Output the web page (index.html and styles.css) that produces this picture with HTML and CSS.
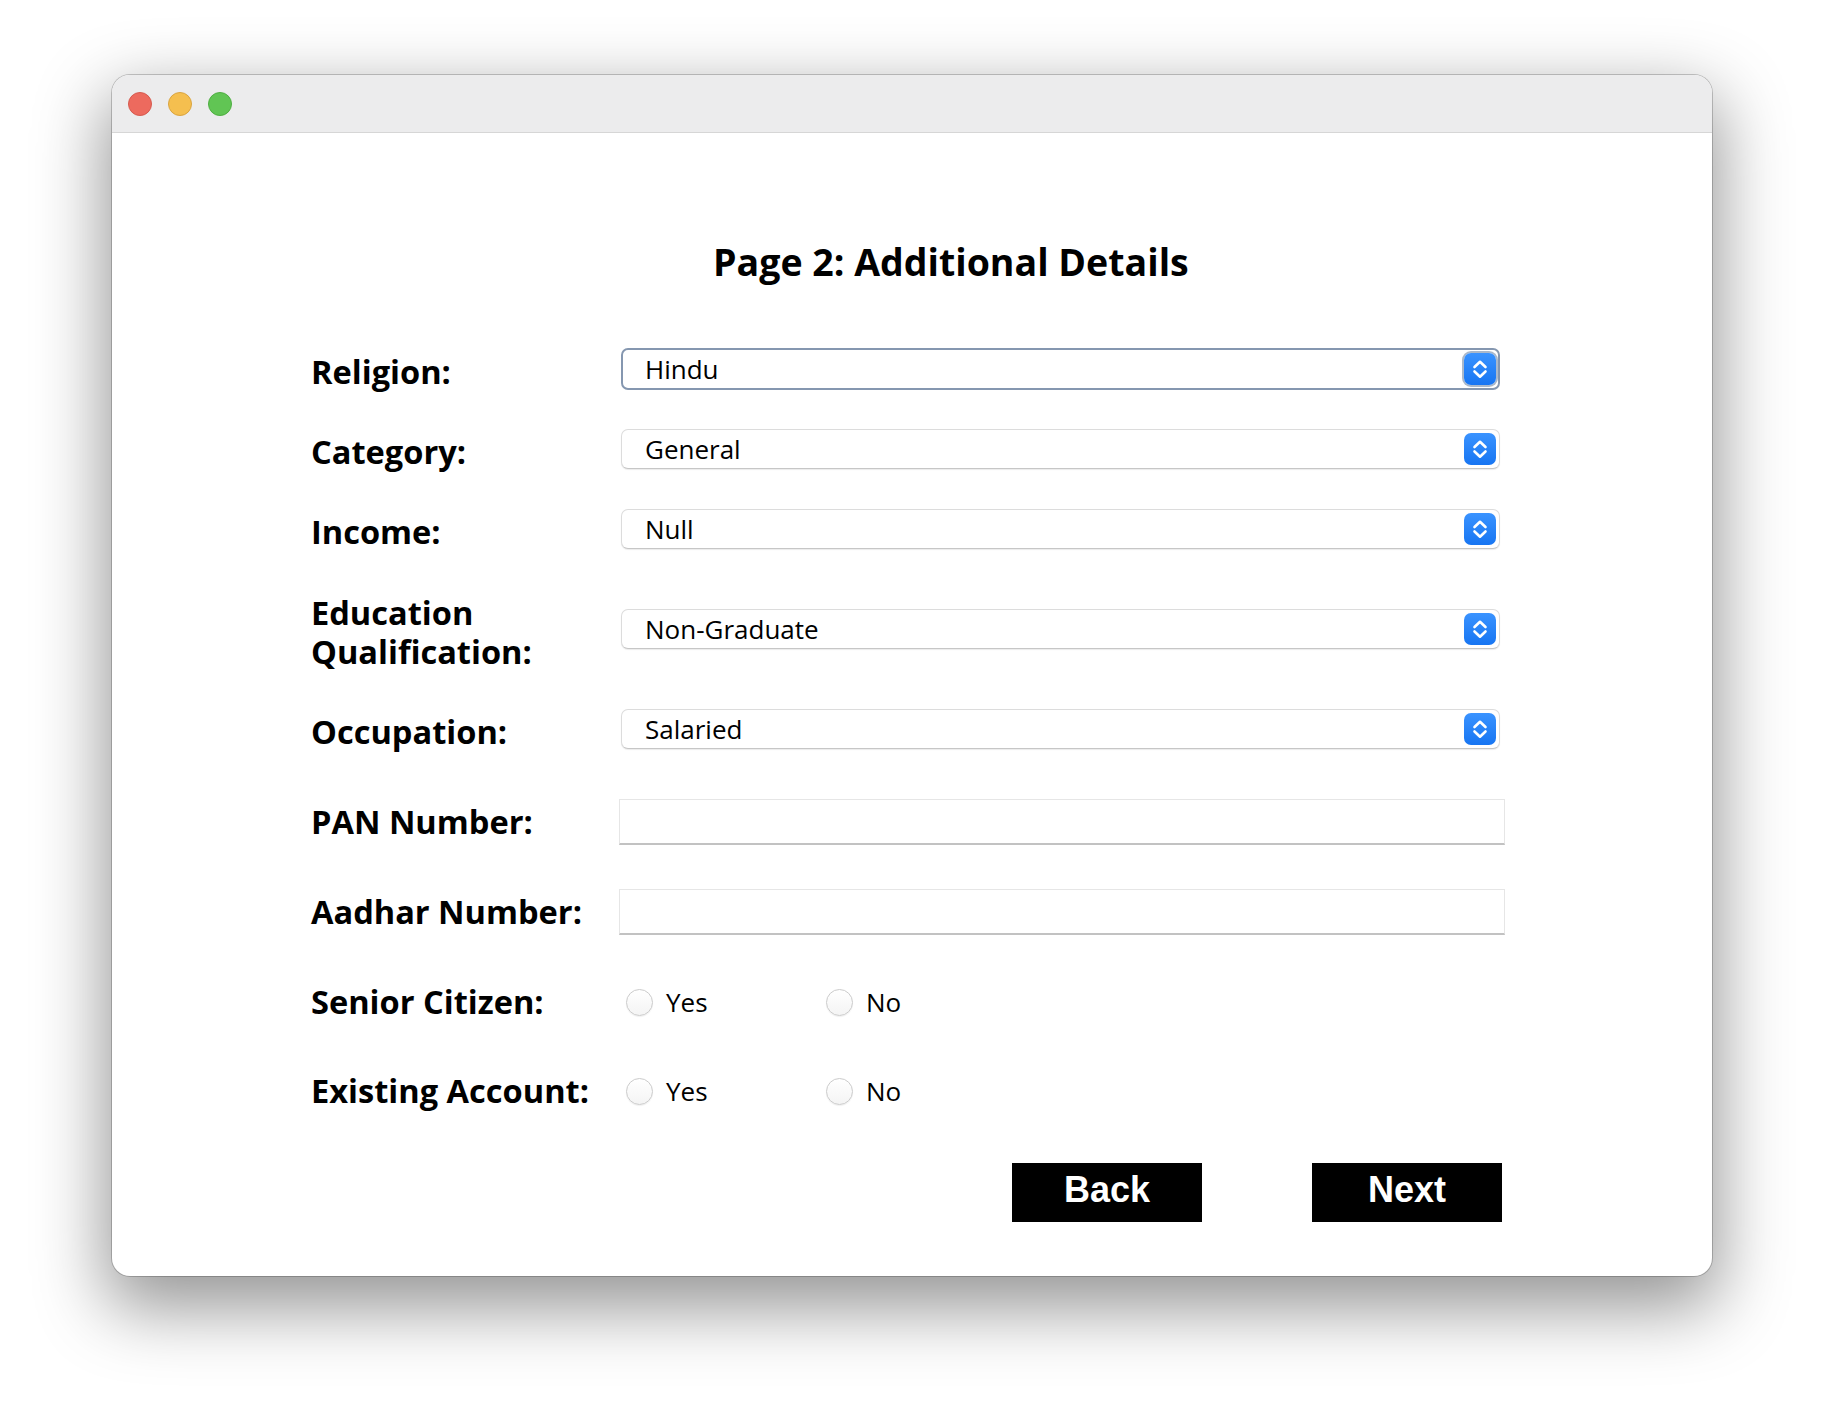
FILE: index.html
```html
<!DOCTYPE html>
<html lang="en">
<head>
<meta charset="utf-8">
<title>Page 2: Additional Details</title>
<link rel="stylesheet" href="styles.css">
</head>
<body>
<div class="window">
  <div class="titlebar">
    <span class="light light-red"></span>
    <span class="light light-yellow"></span>
    <span class="light light-green"></span>
  </div>
  <div class="content">
    <h1 class="title">Page 2: Additional Details</h1>
    <div class="form">
      <div class="label label-combo">Religion:</div>
      <div class="combo combo-focused"><span class="combo-text">Hindu</span><span class="stepper"><svg viewBox="0 0 32 32" width="32" height="32"><path d="M10.5 14 L16 8.8 L21.5 14 M10.5 18.5 L16 23.7 L21.5 18.5" fill="none" stroke="#fff" stroke-width="2.6" stroke-linecap="round" stroke-linejoin="round"/></svg></span></div>

      <div class="label label-combo">Category:</div>
      <div class="combo"><span class="combo-text">General</span><span class="stepper"><svg viewBox="0 0 32 32" width="32" height="32"><path d="M10.5 14 L16 8.8 L21.5 14 M10.5 18.5 L16 23.7 L21.5 18.5" fill="none" stroke="#fff" stroke-width="2.6" stroke-linecap="round" stroke-linejoin="round"/></svg></span></div>

      <div class="label label-combo">Income:</div>
      <div class="combo"><span class="combo-text">Null</span><span class="stepper"><svg viewBox="0 0 32 32" width="32" height="32"><path d="M10.5 14 L16 8.8 L21.5 14 M10.5 18.5 L16 23.7 L21.5 18.5" fill="none" stroke="#fff" stroke-width="2.6" stroke-linecap="round" stroke-linejoin="round"/></svg></span></div>

      <div class="label label-two"><div class="label-line">Education</div><div class="label-line">Qualification:</div></div>
      <div class="combo"><span class="combo-text">Non-Graduate</span><span class="stepper"><svg viewBox="0 0 32 32" width="32" height="32"><path d="M10.5 14 L16 8.8 L21.5 14 M10.5 18.5 L16 23.7 L21.5 18.5" fill="none" stroke="#fff" stroke-width="2.6" stroke-linecap="round" stroke-linejoin="round"/></svg></span></div>

      <div class="label label-combo">Occupation:</div>
      <div class="combo"><span class="combo-text">Salaried</span><span class="stepper"><svg viewBox="0 0 32 32" width="32" height="32"><path d="M10.5 14 L16 8.8 L21.5 14 M10.5 18.5 L16 23.7 L21.5 18.5" fill="none" stroke="#fff" stroke-width="2.6" stroke-linecap="round" stroke-linejoin="round"/></svg></span></div>

      <div class="label">PAN Number:</div>
      <div class="field"></div>

      <div class="label">Aadhar Number:</div>
      <div class="field"></div>

      <div class="label">Senior Citizen:</div>
      <div class="radios">
        <div class="radio-opt"><span class="radio"></span><span class="radio-text">Yes</span></div>
        <div class="radio-opt"><span class="radio"></span><span class="radio-text">No</span></div>
      </div>

      <div class="label">Existing Account:</div>
      <div class="radios">
        <div class="radio-opt"><span class="radio"></span><span class="radio-text">Yes</span></div>
        <div class="radio-opt"><span class="radio"></span><span class="radio-text">No</span></div>
      </div>

      <div class="buttons">
        <div class="btn">Back</div>
        <div class="btn">Next</div>
      </div>
    </div>
  </div>
</div>
</body>
</html>
```

FILE: styles.css
```css
html, body {
  margin: 0;
  padding: 0;
  background: #ffffff;
}

body {
  width: 1824px;
  height: 1424px;
  overflow: hidden;
  font-family: "Open Sans", "DejaVu Sans", sans-serif;
  color: #000;
}

.window {
  width: 1600px;
  height: 1201px;
  margin: 75px 0 0 112px;
  background: #ffffff;
  border-radius: 18px;
  overflow: hidden;
  box-shadow: 0 0 0 1px rgba(0, 0, 0, 0.2), 0 26px 70px 6px rgba(0, 0, 0, 0.42);
}

.titlebar {
  height: 57px;
  background: #ececed;
  border-bottom: 1px solid #d6d6d6;
  display: flex;
  align-items: center;
  padding-left: 16px;
  gap: 16px;
}

.light {
  width: 24px;
  height: 24px;
  border-radius: 50%;
  box-sizing: border-box;
}

.light-red { background: #ed6a5e; border: 1px solid #d55a4f; }
.light-yellow { background: #f5bf4f; border: 1px solid #d9a441; }
.light-green { background: #61c554; border: 1px solid #4fae42; }

.content {
  padding-top: 103px;
}

.title {
  margin: 0 0 41px 601px;
  font-size: 37.5px;
  line-height: 52px;
  font-weight: 700;
  height: 52px;
}

.form {
  display: grid;
  grid-template-columns: 308px 886px;
  grid-template-rows: 80px 80px 80px 120px 80px 106px 74px 106px 72px 131px;
  margin-left: 199px;
  align-items: center;
}

.label {
  font-size: 32.6px;
  font-weight: 700;
  line-height: 40px;
}

.label-combo {
  padding-top: 5px;
}

.label-two {
  padding-top: 6px;
  display: flex;
  flex-direction: column;
}

.label-line {
  height: 39px;
  line-height: 39px;
}

.combo {
  margin-left: 2px;
  width: 879px;
  height: 40px;
  box-sizing: border-box;
  border: 1px solid #dcdcdc;
  border-bottom-color: #c6c6c6;
  border-radius: 7px;
  background: #fff;
  box-shadow: 0 1px 1px rgba(0, 0, 0, 0.08);
  display: flex;
  align-items: center;
  justify-content: space-between;
  padding: 0 3px 0 23px;
}

.combo-focused {
  border: 2px solid #8597b0;
  padding: 0 2px 0 22px;
  height: 42px;
  box-shadow: none;
}

.combo-text {
  font-size: 26px;
  line-height: 36px;
}

.stepper {
  width: 32px;
  height: 32px;
  border-radius: 7px;
  background: linear-gradient(#3a93ff, #1775f2);
  display: flex;
}

.combo-focused .stepper {
  box-shadow: 0 0 0 2px #aab8ca;
}

.field {
  height: 46px;
  box-sizing: border-box;
  border: 1px solid #e6e6e6;
  border-bottom: 2px solid #c2c2c2;
  background: #fff;
}

.radios {
  display: flex;
  align-items: center;
}

.radio-opt {
  width: 200px;
  display: flex;
  align-items: center;
}

.radio {
  width: 27px;
  height: 27px;
  box-sizing: border-box;
  border-radius: 50%;
  border: 1px solid #cbcbcb;
  background: linear-gradient(#ffffff, #f4f4f4);
  box-shadow: 0 1px 1px rgba(0, 0, 0, 0.06);
  margin-left: 7px;
  margin-right: 13px;
}

.radio-text {
  font-size: 26px;
  line-height: 36px;
}

.buttons {
  grid-column: 2;
  display: flex;
  justify-content: flex-end;
  gap: 110px;
  padding-right: 3px;
}

.btn {
  width: 190px;
  height: 59px;
  box-sizing: border-box;
  padding-bottom: 6px;
  background: #000;
  color: #fff;
  font-family: "Liberation Sans", Arial, sans-serif;
  font-weight: 700;
  font-size: 36px;
  line-height: 40px;
  display: flex;
  align-items: center;
  justify-content: center;
}
```
